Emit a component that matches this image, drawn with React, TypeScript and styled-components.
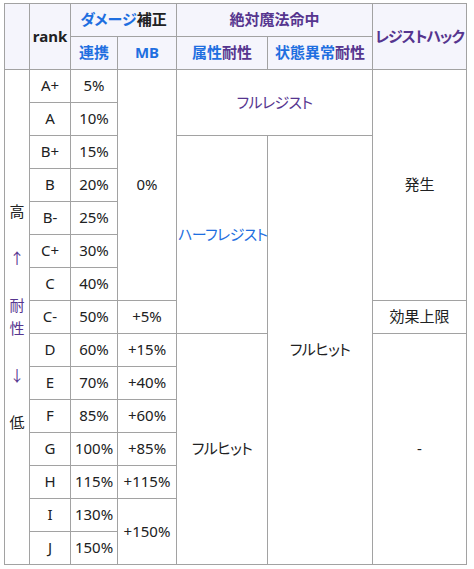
import styled, { createGlobalStyle } from "styled-components";

const GlobalStyle = createGlobalStyle`
  body {
    margin: 0;
    background: #ffffff;
    font-family: "Noto Sans", "Noto Sans CJK JP", sans-serif;
    color: #202122;
  }
`;

const Page = styled.div`
  padding: 3px 4px;
`;

const ResistTable = styled.table`
  border-collapse: collapse;
  table-layout: fixed;
  width: 463px;
  font-size: 15px;
  line-height: 1.3;
  font-feature-settings: "palt";
  border: 1px solid #a2a2a2;
`;

const HeadCell = styled.th<{ $tight?: boolean }>`
  background: #f5f5fc;
  border: 1px solid #a2a2a2;
  height: 32px;
  padding: 0 1px;
  text-align: center;
  vertical-align: middle;
  white-space: nowrap;
  font-weight: bold;
  color: #202122;
  letter-spacing: ${(p) => (p.$tight ? "-1px" : "0")};
`;

const Cell = styled.td<{ $tight?: boolean }>`
  border: 1px solid #a2a2a2;
  height: 32px;
  padding: 0 1px;
  text-align: center;
  vertical-align: middle;
  white-space: nowrap;
  letter-spacing: ${(p) => (p.$tight ? "-0.6px" : "0")};
`;

const SideCell = styled.td`
  border: 1px solid #a2a2a2;
  padding: 0;
  text-align: center;
  vertical-align: middle;
  line-height: 23.5px;
`;

const Link = styled.span<{ $visited?: boolean }>`
  color: ${(p) => (p.$visited ? "#56358f" : "#1f6fe0")};
`;

const rows: { rank: string; chain: string; mb?: string; mbSpan?: number }[] = [
  { rank: "A+", chain: "5%", mb: "0%", mbSpan: 7 },
  { rank: "A", chain: "10%" },
  { rank: "B+", chain: "15%" },
  { rank: "B", chain: "20%" },
  { rank: "B-", chain: "25%" },
  { rank: "C+", chain: "30%" },
  { rank: "C", chain: "40%" },
  { rank: "C-", chain: "50%", mb: "+5%" },
  { rank: "D", chain: "60%", mb: "+15%" },
  { rank: "E", chain: "70%", mb: "+40%" },
  { rank: "F", chain: "85%", mb: "+60%" },
  { rank: "G", chain: "100%", mb: "+85%" },
  { rank: "H", chain: "115%", mb: "+115%" },
  { rank: "I", chain: "130%", mb: "+150%", mbSpan: 2 },
  { rank: "J", chain: "150%" },
];

const extraCells = (i: number) => {
  switch (i) {
    case 0:
      return (
        <>
          <Cell colSpan={2} rowSpan={2} $tight>
            <Link $visited>フルレジスト</Link>
          </Cell>
          <Cell rowSpan={7}>発生</Cell>
        </>
      );
    case 2:
      return (
        <>
          <Cell rowSpan={6} $tight>
            <Link>ハーフレジスト</Link>
          </Cell>
          <Cell rowSpan={13} $tight>
            フルヒット
          </Cell>
        </>
      );
    case 7:
      return <Cell>効果上限</Cell>;
    case 8:
      return (
        <>
          <Cell rowSpan={7} $tight>
            フルヒット
          </Cell>
          <Cell rowSpan={7}>-</Cell>
        </>
      );
    default:
      return null;
  }
};

export default function App() {
  return (
    <Page>
      <GlobalStyle />
      <ResistTable>
        <colgroup>
          <col style={{ width: 25 }} />
          <col style={{ width: 41 }} />
          <col style={{ width: 47 }} />
          <col style={{ width: 59 }} />
          <col style={{ width: 91 }} />
          <col style={{ width: 105 }} />
          <col style={{ width: 94 }} />
        </colgroup>
        <thead>
          <tr>
            <HeadCell rowSpan={2} />
            <HeadCell rowSpan={2}>rank</HeadCell>
            <HeadCell colSpan={2}>
              <Link>ダメージ</Link>補正
            </HeadCell>
            <HeadCell colSpan={2}>
              <Link $visited>絶対魔法命中</Link>
            </HeadCell>
            <HeadCell rowSpan={2} $tight>
              <Link $visited>レジストハック</Link>
            </HeadCell>
          </tr>
          <tr>
            <HeadCell>
              <Link>連携</Link>
            </HeadCell>
            <HeadCell>
              <Link>MB</Link>
            </HeadCell>
            <HeadCell>
              <Link>属性</Link>
              <Link $visited>耐性</Link>
            </HeadCell>
            <HeadCell>
              <Link>状態異常</Link>
              <Link $visited>耐性</Link>
            </HeadCell>
          </tr>
        </thead>
        <tbody>
          {rows.map((r, i) => (
            <tr key={r.rank}>
              {i === 0 && (
                <SideCell rowSpan={15}>
                  高
                  <br />
                  <br />
                  <Link $visited>↑</Link>
                  <br />
                  <br />
                  <Link $visited>耐</Link>
                  <br />
                  <Link $visited>性</Link>
                  <br />
                  <br />
                  <Link $visited>↓</Link>
                  <br />
                  <br />
                  低
                </SideCell>
              )}
              <Cell>{r.rank}</Cell>
              <Cell>{r.chain}</Cell>
              {r.mb && <Cell rowSpan={r.mbSpan ?? 1}>{r.mb}</Cell>}
              {extraCells(i)}
            </tr>
          ))}
        </tbody>
      </ResistTable>
    </Page>
  );
}
